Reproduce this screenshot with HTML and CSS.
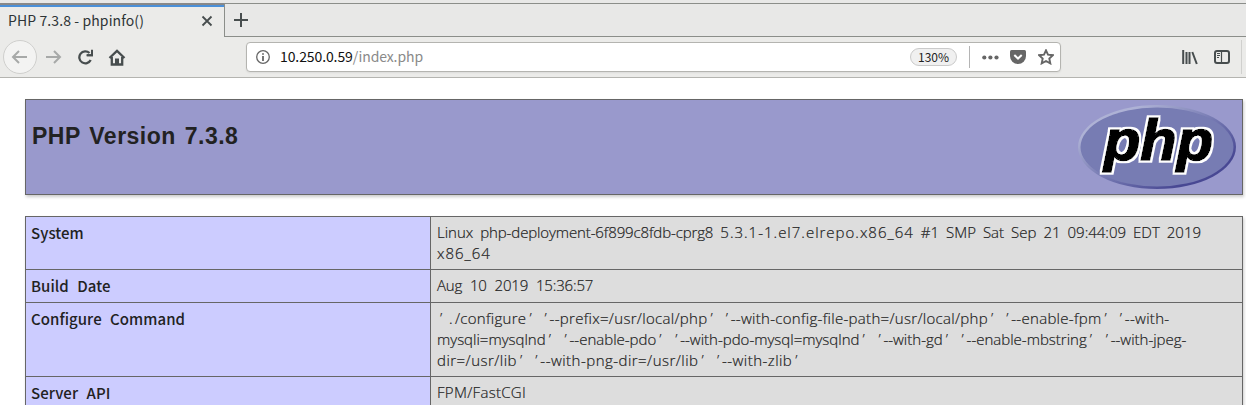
FILE: index.html
```html
<!DOCTYPE html>
<html lang="en">
<head>
<meta charset="utf-8">
<title>PHP 7.3.8 - phpinfo()</title>
<link rel="stylesheet" href="styles.css">
</head>
<body>
<header class="tabs">
  <div class="tab">
    <span class="tab-title">PHP 7.3.8 - phpinfo()</span>
    <svg class="close" width="12" height="12" viewBox="0 0 12 12"><path d="M1.500 1.500l9 9M10.500 1.500l-9 9"/></svg>
  </div>
  <div class="strip"><svg width="16" height="16" viewBox="0 0 16 16"><path d="M8 1v14M1 8h14"/></svg></div>
</header>
<nav class="toolbar">
  <div class="back"><svg width="18" height="16" viewBox="0 0 18 16"><path d="M16 8H2M8 2L2 8l6 6"/></svg></div>
  <svg class="forward" width="18" height="16" viewBox="0 0 18 16"><path d="M2 8h14M10 2l6 6-6 6"/></svg>
  <svg class="reload" width="18" height="16" viewBox="0 0 18 16"><path class="ink" d="M12.500 4A6 6 0 1 0 13.700 11"/><path class="solid" d="M16 .8V7.200H9.500V5.200H14V.8z"/><path d="M10 6.200h5V1"/></svg>
  <svg class="home" width="18" height="17" viewBox="0 0 18 17"><path class="ink" d="M1.500 9L9 1.800 16.500 9M3.800 8v7.500h10.400V8"/><path class="solid" d="M7 15.500V9.500h4v6z"/></svg>
  <div class="urlbar">
    <svg class="info" width="14" height="14" viewBox="0 0 14 14"><circle cx="7" cy="7" r="6.300"/><path d="M7 3.200v1.600M7 6v5"/></svg>
    <span class="url"><b>10.250.0.59</b>/index.php</span>
    <span class="zoom">130%</span>
    <i class="divider"></i>
    <svg class="dots" width="17" height="5" viewBox="0 0 17 5"><circle cx="2.300" cy="2.500" r="2.100"/><circle cx="8.400" cy="2.500" r="2.100"/><circle cx="14.500" cy="2.500" r="2.100"/></svg>
    <svg class="pocket" width="16" height="14" viewBox="0 0 16 14"><path class="shape" d="M1.500 0h13Q16 0 16 1.500V6a8 8 0 0 1-16 0V1.500Q0 0 1.500 0z"/><path class="check" d="M4.300 5L8 8.500 11.700 5"/></svg>
    <svg class="star" width="16" height="16" viewBox="0 0 16 16"><path d="M8 1.300l2 4.400 4.900.5-3.600 3.300 1 4.900L8 12l-4.300 2.400 1-4.900L1.100 6.200 6 5.700z"/></svg>
  </div>
  <svg class="library" width="16" height="15" viewBox="0 0 16 15"><path d="M1.200 0v14M4.500 2v12M7.500 2v12M10.300 2l4.500 12"/></svg>
  <svg class="sidebar" width="16" height="14" viewBox="0 0 16 14"><rect x="1" y="1" width="14" height="12" rx="2"/><path class="thin" d="M7.500 1v12M3 3.500h3M3 5.500h3M3 7.500h2"/></svg>
  <i class="edge"></i>
</nav>
<main>
  <section class="banner">
    <h1>PHP Version 7.3.8</h1>
    <svg class="logo" width="160" height="86" viewBox="0 0 160 86">
      <defs>
        <linearGradient id="rim" x1="0" y1="0" x2="1" y2="1"><stop offset=".2" stop-color="#aeb2d5"/><stop offset=".5" stop-color="#777bb3"/><stop offset=".8" stop-color="#484893"/></linearGradient>
        <filter id="soft"><feGaussianBlur stdDeviation=".7"/></filter>
        <filter id="halo" x="-10%" y="-10%" width="120%" height="120%"><feMorphology in="SourceAlpha" operator="dilate" radius="1.500" result="wide"/><feFlood flood-color="#fff"/><feComposite in2="wide" operator="in"/><feGaussianBlur stdDeviation=".3"/><feMerge><feMergeNode/><feMergeNode in="SourceGraphic"/></feMerge></filter>
      </defs>
      <ellipse cx="80" cy="42" rx="79" ry="42" fill="url(#rim)"/>
      <ellipse cx="80" cy="42" rx="76.500" ry="39.500" fill="#777bb3" filter="url(#soft)"/>
      <text x="27" y="54.500" textLength="109" lengthAdjust="spacingAndGlyphs" filter="url(#halo)">php</text>
    </svg>
  </section>
  <table>
    <tr class="two"><th>System</th><td><div class="l1">Linux <span class="host">php-deployment-6f899c8fdb-cprg8</span> <span class="kernel">5.3.1-1.el7.elrepo.x86_64</span> #1 SMP Sat Sep 21 09:44:09 EDT 2019</div><div class="arch">x86_64</div></td></tr>
    <tr class="one"><th>Build Date</th><td><div class="date">Aug 10 2019 15:36:57</div></td></tr>
    <tr class="three"><th>Configure Command</th><td><div class="c1"><i>’</i><span class="dot">.</span>/configure<i>’</i> <i>’</i>--prefix=/usr/local/php<i>’</i> <i>’</i>--with-config-file-path=/usr/local/php<i>’</i> <i>’</i>--enable-fpm<i>’</i> <i>’</i>--with-</div><div class="c2">mysqli=mysqlnd<i>’</i> <i>’</i>--enable-pdo<i>’</i> <i>’</i>--with-pdo-mysql=mysqlnd<i>’</i> <i>’</i>--with-gd<i>’</i> <i>’</i>--enable-mbstring<i>’</i> <i>’</i>--with-jpeg-</div><div class="c3">dir=/usr/lib<i>’</i> <i>’</i>--with-png-dir=/usr/lib<i>’</i> <i>’</i>--with-zlib<i>’</i></div></td></tr>
    <tr><th>Server API</th><td><div class="api">FPM/FastCGI</div></td></tr>
  </table>
</main>
</body>
</html>
```
FILE: styles.css
```css
* { box-sizing: border-box; }
body { margin: 0; height: 405px; overflow: hidden; background: #fff; color: #222; font-family: "Noto Sans CJK SC", "Noto Sans", sans-serif; }
svg { display: block; flex: none; fill: none; stroke: #474d4e; stroke-width: 2; }
.tabs { display: flex; height: 37px; background: #e8e8e7; border-top: 3px solid #e8e8e7; }
.tab { display: flex; align-items: center; justify-content: space-between; width: 224px; padding: 0 11px 0 8px; border-top: 2px solid #888; background: #ebebe9; box-shadow: inset 0 2px #4a90d9; font-size: 14px; color: #2e3436; }
.tab-title { margin-top: -2px; line-height: 20px; letter-spacing: .1px; }
.close { stroke-width: 1.8; }
.strip { flex: 1; padding: 8px 0 0 8px; border: 1px solid #8b8e8a; border-right: 0; }
.toolbar { display: flex; align-items: center; height: 41px; padding-left: 3px; background: #ebebe9; border-bottom: 1px solid #b4b4b0; }
.back { display: flex; align-items: center; justify-content: center; width: 34px; height: 34px; border: 1px solid #cfcfcd; border-radius: 50%; background: #f3f3f2; }
.back svg, .forward { stroke: #a7a9a8; }
.forward { margin-left: 7px; }
.reload { margin-left: 15px; }
.home { margin-left: 13px; }
.ink { stroke-width: 2.3; }
.solid { fill: #474d4e; stroke: none; }
.urlbar { display: flex; align-items: center; width: 815px; height: 30px; margin-left: 120px; padding: 0 6px 0 9px; border: 1px solid #b4b4b0; border-radius: 4px; background: #fff; box-shadow: 0 1px 2px #0001; }
.info { stroke: #666; stroke-width: 1.3; }
.info path { stroke-width: 1.8; }
.url { flex: 1; margin: -2px 0 0 10px; font-size: 14px; line-height: 20px; letter-spacing: -.1px; color: #8a8a8a; }
.url b { font-weight: 400; color: #111; }
.zoom { width: 47px; height: 18px; border: 1px solid #cacaca; border-radius: 9px; background: #f0f0f0; font-size: 12px; line-height: 15px; text-align: center; }
.divider { width: 1px; height: 22px; margin: 0 12px; background: #b4b4b4; }
.dots { fill: #666; stroke: none; }
.pocket { margin-left: 11px; }
.shape { fill: #666; stroke: none; }
.check { stroke: #fff; }
.star { margin-left: 12px; stroke: #666; stroke-width: 1.9; }
.library { margin-left: 121px; }
.sidebar { margin-left: 16px; }
.thin { stroke-width: 1.2; }
.edge { width: 1px; height: 34px; margin-left: 11px; background: #d0d0ce; }
main { padding: 21px 3px 0 25px; }
.banner { display: flex; justify-content: space-between; height: 96px; padding: 5px 5px 0 6px; border: 1px solid #666; background: #99c; box-shadow: 1px 2px 3px #ccc; }
h1 { margin: 15px 0 0; font: bold 23px/32px "Liberation Sans", sans-serif; letter-spacing: .5px; word-spacing: 2px; }
.logo { stroke: none; }
.logo text { font: italic bold 58px "Liberation Sans", sans-serif; fill: #000; stroke: #000; stroke-width: 1.6px; }
table { width: 1218px; margin-top: 21px; border-collapse: collapse; table-layout: fixed; box-shadow: 1px 2px 3px #ccc; font-size: 15px; line-height: 21px; }
th, td { padding: 5px 5px 4px; border: 1px solid #666; vertical-align: top; text-align: left; white-space: nowrap; }
.two { height: 53px; }
.one { height: 33px; }
.three { height: 74px; }
th { width: 405px; background: #ccf; font-weight: 500; word-spacing: 5px; letter-spacing: .05px; }
td { background: #ddd; font-family: "Open Sans", sans-serif; font-weight: 300; padding-left: 6px; -webkit-text-stroke: .2px #222; }
td i { display: inline-block; width: 8px; height: 20px; padding-left: 3px; font-style: normal; letter-spacing: 0; vertical-align: top; }
.dot { padding: 0 2px 0 4px; }
.l1 { word-spacing: 3.1px; }
.host { letter-spacing: -.12px; }
.kernel { letter-spacing: 1px; }
.arch { letter-spacing: 1px; }
.date { word-spacing: 4px; letter-spacing: -.15px; }
.c1 { word-spacing: 3px; letter-spacing: .3px; }
.c2 { word-spacing: 4px; letter-spacing: 0; }
.c3 { word-spacing: 3px; letter-spacing: .47px; }
.api { letter-spacing: .3px; }
```
